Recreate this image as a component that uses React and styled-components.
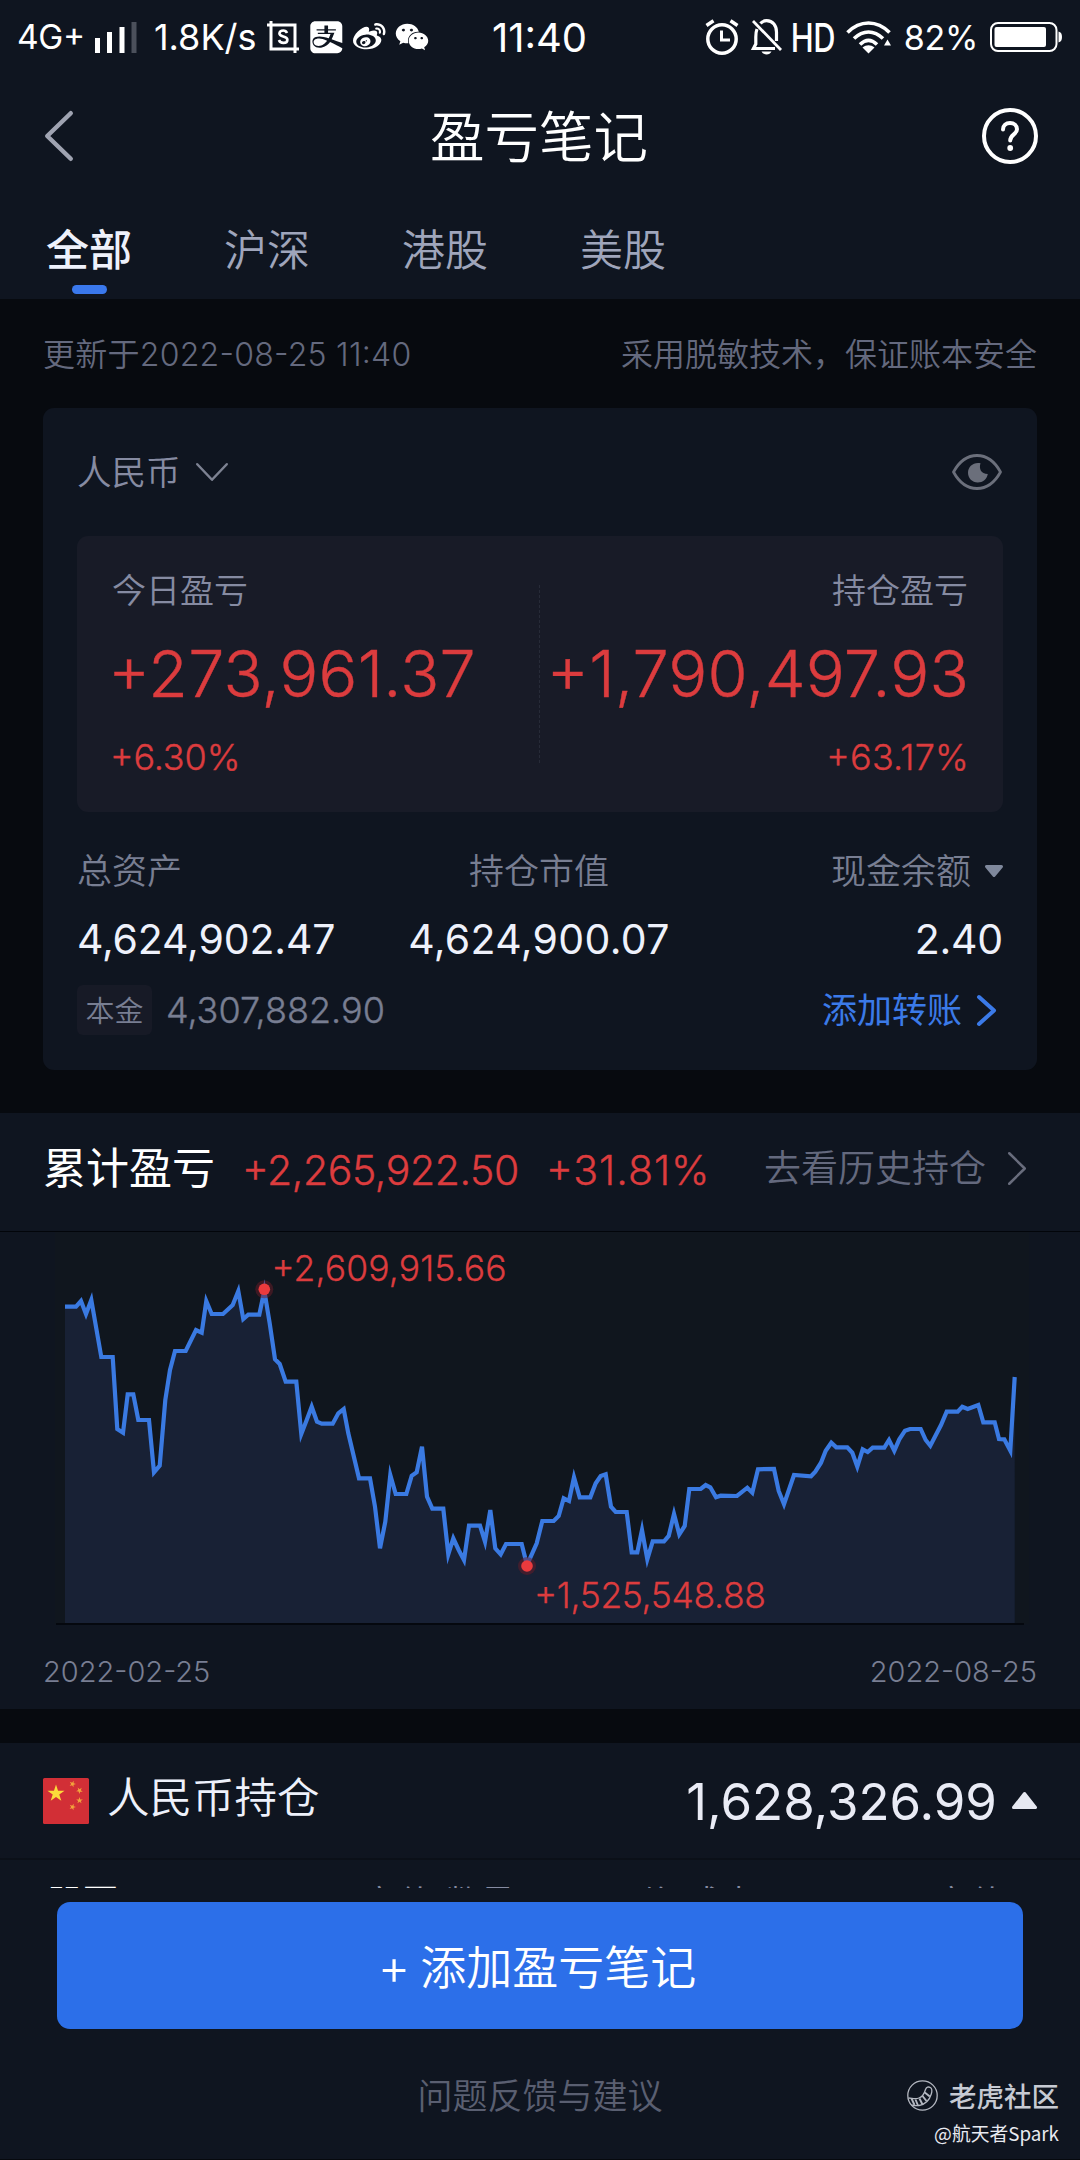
import React from "react";
import styled, { createGlobalStyle } from "styled-components";
import { FaAlipay, FaWeibo, FaWeixin } from "react-icons/fa6";

const c = {
  page: "#070a0f",
  panel: "#0f1520",
  inset: "#181b27",
  line: "#02050a",
  white: "#ffffff",
  soft: "#eef1fb",
  muted: "#868ba2",
  dim: "#787e92",
  faint: "#64697e",
  red: "#dc3c3e",
  blue: "#3b7ae8",
};

const Global = createGlobalStyle`
  * { box-sizing: border-box; }
  body { margin: 0; background: ${c.page}; }
`;

const Screen = styled.main`
  position: relative;
  width: 1080px;
  height: 2160px;
  display: flex;
  flex-direction: column;
  overflow: hidden;
  background: ${c.page};
  font-family: Inter, "Noto Sans CJK SC", sans-serif;
  font-feature-settings: "case";
  font-weight: 350;
  color: ${c.white};
  white-space: nowrap;
`;

const Text = styled.span`
  font-size: ${(p) => p.$size}px;
  line-height: ${(p) => p.$lh || p.$size}px;
  color: ${(p) => p.$color || "inherit"};
  font-weight: ${(p) => p.$weight || 350};
  letter-spacing: ${(p) => p.$ls || 0}px;
  margin: ${(p) => p.$m || 0};
`;

/* Figures set in the light cut, with slightly thickened stems. */
const Figure = styled(Text)`
  -webkit-text-stroke: 0.4px currentColor;
`;

const Svg = styled.svg`
  display: block;
  flex: none;
  overflow: visible;
`;

/* ---------- header ---------- */

const Header = styled.header`
  height: 299px;
  background: ${c.panel};
`;

const StatusBar = styled.div`
  display: grid;
  grid-template-columns: 1fr auto 1fr;
  align-items: center;
  height: 74px;
  padding: 0 18px 0 17px;
`;

const StatusGroup = styled.div`
  display: flex;
  align-items: center;
  justify-content: ${(p) => (p.$end ? "flex-end" : "flex-start")};
  gap: ${(p) => p.$gap}px;
`;

const NetSpeed = styled(Text)`
  margin: 0 0 0 7px;
`;

const HdBadge = styled.span`
  display: flex;
  justify-content: center;
  width: 42px;
  margin-left: -2px;
  font-size: 39px;
  line-height: 39px;
  font-weight: 500;
  letter-spacing: -0.5px;
  transform: scaleX(0.79);
`;

const AppIcons = styled.div`
  display: flex;
  align-items: center;
  gap: 9px;
  height: 32px;
  svg { display: block; flex: none; }
`;

const NavBar = styled.div`
  display: grid;
  grid-template-columns: 1fr auto 1fr;
  align-items: center;
  height: 124px;
  padding: 0 42px 0 45px;
`;

const NavEnd = styled.div`
  display: flex;
  justify-content: flex-end;
`;

const HelpButton = styled.div`
  display: flex;
  align-items: center;
  justify-content: center;
  width: 56px;
  height: 56px;
  border: 4.5px solid ${c.white};
  border-radius: 50%;
`;

const Tabs = styled.nav`
  display: flex;
  gap: 92px;
  padding: 17px 46px 0;
`;

const Tab = styled.div`
  display: flex;
  flex-direction: column;
  align-items: center;
  font-size: 43px;
  line-height: 70px;
  font-weight: ${(p) => (p.$active ? 500 : 350)};
  color: ${(p) => (p.$active ? c.soft : "#9fa5bb")};
  &::after {
    content: "";
    width: 35px;
    height: 9px;
    border-radius: 5px;
    background: ${(p) => (p.$active ? "#3a78ec" : "transparent")};
  }
`;

/* ---------- account card ---------- */

const NoticeRow = styled.div`
  display: flex;
  justify-content: space-between;
  align-items: center;
  height: 109px;
  padding: 2px 43px 0;
`;

const Card = styled.section`
  height: 662px;
  margin: 0 43px 43px;
  padding: 0 34px;
  border-radius: 11px;
  background: ${c.panel};
`;

const CardTop = styled.div`
  display: flex;
  justify-content: space-between;
  align-items: center;
  height: 128px;
  padding-right: 1px;
`;

const Currency = styled.div`
  display: flex;
  align-items: center;
  gap: 15px;
`;

const ProfitBox = styled.div`
  display: grid;
  grid-template-columns: 1fr 0 1fr;
  height: 276px;
  padding: 33px 35px 0;
  border-radius: 11px;
  background: ${c.inset};
`;

const Profit = styled.div`
  display: flex;
  flex-direction: column;
  align-items: ${(p) => (p.$end ? "flex-end" : "flex-start")};
  gap: 23px;
`;

const DashedRule = styled.div`
  height: 178px;
  margin: 16px 0 0 -1px;
  border-left: 1px dashed #272b38;
`;

const Stats = styled.div`
  display: grid;
  grid-template-columns: 1fr auto 1fr;
  margin-top: 37px;
`;

const Stat = styled.div`
  display: flex;
  flex-direction: column;
  align-items: ${(p) => p.$align};
  gap: 20px;
`;

const Inline = styled.div`
  display: flex;
  align-items: center;
  gap: ${(p) => p.$gap || 0}px;
`;

const CardBottom = styled.div`
  display: flex;
  justify-content: space-between;
  align-items: center;
  height: 50px;
  margin: 20px 7px 0 0;
`;

const Tag = styled.span`
  width: 75px;
  height: 50px;
  border-radius: 6px;
  background: #171a26;
  text-align: center;
  font-size: 29px;
  line-height: 54px;
  color: ${c.dim};
`;

/* ---------- cumulative profit ---------- */

const Panel = styled.section`
  background: ${c.panel};
  margin-bottom: ${(p) => p.$mb || 0}px;
`;

const TotalHead = styled.div`
  display: flex;
  align-items: center;
  height: 119px;
  padding: 0 54px 7px 43px;
  border-bottom: 1px solid ${c.line};
`;

const HistoryLink = styled.div`
  display: flex;
  align-items: center;
  gap: 22px;
  margin-left: auto;
`;

const DateRow = styled.div`
  display: flex;
  justify-content: space-between;
  align-items: center;
  height: 84px;
  padding: 9px 43px 0;
`;

/* ---------- holdings ---------- */

const HoldingHead = styled.div`
  display: flex;
  align-items: center;
  justify-content: space-between;
  height: 117px;
  padding: 0 43px;
  border-bottom: 2px solid #0b1018;
`;

const ColumnHead = styled.div`
  display: grid;
  grid-template-columns: 314px 243px 1fr auto;
  height: 28px;
  padding: 26px 75px 0 47px;
  overflow: hidden;
`;

const Footer = styled.footer`
  flex: 1;
  display: flex;
  flex-direction: column;
  align-items: center;
  padding-top: 14px;
  background: ${c.panel};
  border-bottom: 1px solid #06090e;
`;

const AddButton = styled.button`
  display: flex;
  align-items: center;
  justify-content: center;
  gap: 10px;
  width: 966px;
  height: 127px;
  margin-bottom: 45px;
  padding: 2px 6px 0 0;
  border: 0;
  border-radius: 13px;
  background: #2c6fe9;
  color: ${c.white};
  font-family: inherit;
`;

const Watermark = styled.div`
  position: absolute;
  right: 21px;
  bottom: 17px;
  display: flex;
  flex-direction: column;
  align-items: flex-end;
  gap: 12px;
  font-family: "Noto Sans CJK SC", sans-serif;
`;

/* ---------- drawings ---------- */

const Signal = () => (
  <Svg width="42" height="31" viewBox="0 0 42 31">
    <g fill="#fff">
      <rect x="0" y="16" width="5" height="15" />
      <rect x="12" y="10" width="5" height="21" />
      <rect x="24.5" y="5" width="5" height="26" />
      <rect x="36.5" y="0" width="5" height="31" fill="#4b505b" />
    </g>
  </Svg>
);

const CropS = () => (
  <Svg width="32" height="32" viewBox="0 0 32 32" fill="none" stroke="#fff" strokeWidth="3">
    <path d="M0 4H28V32M4 0V28H32" />
    <path strokeWidth="2.600" d="M20 12C19.300 10.300 17.900 9.500 16.200 9.500C14 9.500 12.400 10.700 12.400 12.500C12.400 16.400 20.400 14.400 20.400 18.700C20.400 20.600 18.700 21.900 16.400 21.900C14.200 21.900 12.600 20.900 12 19" />
  </Svg>
);

const Alarm = () => (
  <Svg width="34" height="36" viewBox="0 0 34 36" fill="none" stroke="#fff">
    <circle cx="17" cy="20" r="14.200" strokeWidth="3.500" />
    <path strokeWidth="3" d="M16.500 11.500V21H25" />
    <path strokeWidth="3.500" d="M1.500 6.500L8.500 1.800M32.500 6.500L25.500 1.800" />
  </Svg>
);

const BellOff = () => (
  <Svg width="31" height="36" viewBox="0 0 31 36" fill="none" stroke="#fff" strokeWidth="3.200">
    <path d="M6 10C5 12.500 4.800 15 4.800 18V25L2.500 29.500H24" />
    <path d="M9.500 4.500C11 2.500 13 1.700 15.500 1.700C22 1.700 25.500 7 25.500 13V22" />
    <path d="M2 2L30 31" strokeWidth="2.800" />
    <path d="M10.500 32.500H20.500C19.500 34.500 17.800 35.500 15.500 35.500C13.200 35.500 11.500 34.500 10.500 32.500Z" fill="#fff" stroke="none" />
  </Svg>
);

const Wifi = () => (
  <Svg width="46" height="33" viewBox="0 0 46 33" fill="none" stroke="#fff" strokeWidth="3.600">
    <path d="M1.500 11.500C14 -1.200 31 -1.200 43.500 11.500" />
    <path d="M8 17.500C17 8.800 28 8.800 37 17.500" />
    <path d="M14 23.500C19.500 18.200 25.500 18.200 31 23.500" />
    <path d="M16.500 26.500C20.500 23.500 24.500 23.500 28.500 26.500L22.500 32.500Z" fill="#fff" stroke="none" />
    <path d="M38 24.500L41.500 18.500L45 24.500Z" fill="#fff" stroke="none" />
  </Svg>
);

const Battery = () => (
  <Svg width="72" height="30" viewBox="0 0 72 30">
    <rect x="1" y="1" width="65.500" height="28" rx="7" fill="none" stroke="#fff" strokeWidth="2" />
    <rect x="4.500" y="5" width="51.500" height="20" rx="2" fill="#fff" />
    <path d="M68.500 9.500C71 10 72 12 72 15C72 18 71 20 68.500 20.500Z" fill="#fff" />
  </Svg>
);

const Chevron = ({ w, h, dir, color, stroke }) => {
  const s = stroke / 2;
  const d = {
    left: `M${w - s} ${s}L${s} ${h / 2}L${w - s} ${h - s}`,
    right: `M${s} ${s}L${w - s} ${h / 2}L${s} ${h - s}`,
    down: `M${s} ${s}L${w / 2} ${h - s}L${w - s} ${s}`,
  }[dir];
  return (
    <Svg width={w} height={h} fill="none" stroke={color} strokeWidth={stroke} strokeLinecap="round" strokeLinejoin="round">
      <path d={d} />
    </Svg>
  );
};

const QuestionMark = () => (
  <Svg width="18" height="30" viewBox="0 0 18 30" fill="none" stroke="#fff" strokeWidth="4" strokeLinecap="round">
    <path d="M2 8.500C2 4.500 5 2 9 2C13 2 16 4.600 16 8.300C16 13.500 9.200 13.300 9.200 19.500" />
    <circle cx="9.200" cy="27" r="2.900" fill="#fff" stroke="none" />
  </Svg>
);

const Eye = () => (
  <Svg width="50" height="36" viewBox="0 0 50 36">
    <path d="M1.500 18C7 8 15 1.500 25 1.500C35 1.500 43 8 48.500 18C43 28 35 34.500 25 34.500C15 34.500 7 28 1.500 18Z" fill="none" stroke="#6b6f7b" strokeWidth="2.800" strokeLinejoin="round" />
    <path d="M28.500 9.200C26.700 14.500 29 20 35.800 20C35 25 30.800 28.500 25.800 28.500C20.200 28.500 16 24.300 16 18.800C16 12.500 21.500 7.800 28.500 9.200Z" fill="#6b6f7b" />
  </Svg>
);

const Triangle = ({ w, h, up, color }) => (
  <Svg width={w} height={h} fill={color} stroke={color} strokeWidth="3" strokeLinejoin="round">
    <path d={up ? `M${w / 2} 1.500L${w - 1.5} ${h - 1.5}H1.500Z` : `M1.500 1.500H${w - 1.5}L${w / 2} ${h - 1.5}Z`} />
  </Svg>
);

const STAR = "M0 -1L.2245 -.309L.951 -.309L.3633 .118L.5878 .809L0 .382L-.5878 .809L-.3633 .118L-.951 -.309L-.2245 -.309Z";

const Flag = () => (
  <Svg width="46" height="46" viewBox="0 0 46 46">
    <rect width="46" height="46" rx="1.500" fill="#d22f36" />
    <path d={STAR} transform="translate(13 15.500) scale(9)" fill="#fbdc3a" />
    {[[29.5, 6, 20], [36.5, 12.5, 40], [36.5, 22.5, 0], [29.5, 29, 20]].map(([x, y, r]) => (
      <path key={`${x}-${y}`} d={STAR} transform={`translate(${x} ${y}) rotate(${r}) scale(3.500)`} fill="#f2a53c" />
    ))}
  </Svg>
);

const TigerLogo = () => (
  <Svg width="31" height="31" viewBox="0 0 31 31" fill="none" stroke="#b4b8c1" strokeWidth="1.300">
    <circle cx="15.500" cy="15.500" r="14.700" />
    <path d="M1.500 18C5 18 8 19.500 12 18C16 16.500 17.500 13 18.500 9.500C19.300 7 21.500 6.500 23.300 7.500C25.300 8.700 25.200 11 24.300 14C22.500 20 18 24.500 12 25.500C9 26 6.500 25.500 4.500 24.800" />
    <path strokeWidth="1.900" d="M4.500 18.500L7.500 25M8.500 19.500L11 25.500M12.500 18.500L15.500 24.500M15.500 16L19.500 21M17.800 12.500L22.800 16.500" />
  </Svg>
);

/* ---------- chart ---------- */

const SERIES = [
  [75, 260], [108, 260], [123, 243], [138, 282], [154, 240], [184, 411], [218, 411], [232, 627], [249, 638],
  [263, 523], [280, 523], [295, 600], [327, 600], [342, 757], [359, 737], [376, 540], [390, 450], [405, 393],
  [437, 393], [468, 330], [485, 338], [499, 243], [515, 282], [549, 282], [578, 255], [595, 213], [610, 297],
  [625, 284], [658, 284], [673, 212], [689, 310], [705, 418], [719, 432], [737, 485], [769, 485], [784, 642],
  [800, 600], [815, 560], [831, 605], [845, 611], [878, 611], [895, 580], [911, 567], [925, 640], [957, 775],
  [990, 775], [1005, 860], [1020, 985], [1036, 905], [1051, 765], [1067, 822], [1099, 822], [1115, 767],
  [1130, 757], [1146, 680], [1161, 830], [1177, 866], [1210, 866], [1225, 1003], [1240, 955], [1256, 990],
  [1272, 1020], [1287, 917], [1320, 917], [1335, 965], [1351, 870], [1366, 985], [1382, 1003], [1398, 972],
  [1445, 972], [1461, 1035], [1490, 970], [1507, 903], [1541, 903], [1556, 888], [1571, 835], [1587, 843],
  [1602, 772], [1619, 832], [1651, 832], [1667, 790], [1682, 768], [1697, 763], [1713, 860], [1727, 876],
  [1760, 876], [1775, 997], [1792, 997], [1806, 930], [1822, 1018], [1838, 964], [1872, 964], [1886, 948],
  [1902, 882], [1918, 943], [1934, 918], [1948, 807], [1982, 807], [1997, 795], [2011, 802], [2028, 832],
  [2042, 827], [2091, 828], [2122, 803], [2137, 818], [2154, 748], [2202, 747], [2216, 813], [2232, 853],
  [2262, 765], [2313, 769], [2326, 755], [2343, 728], [2357, 692], [2374, 668], [2389, 682], [2422, 682],
  [2437, 698], [2452, 740], [2468, 688], [2483, 696], [2498, 683], [2533, 683], [2547, 660], [2563, 692],
  [2578, 658], [2595, 632], [2610, 627], [2642, 627], [2657, 660], [2671, 677], [2703, 615], [2720, 575],
  [2753, 575], [2767, 560], [2783, 567], [2815, 555], [2830, 607], [2864, 607], [2877, 657], [2893, 658],
  [2911, 692], [2924, 471],
].map(([x, y]) => [40 + x / 3, y / 3 - 12]);

const linePoints = SERIES.map((p) => p.map((n) => n.toFixed(1)).join(",")).join(" ");
const BASE = 391;

const Extreme = ({ x, y, tx, ty, len, children }) => (
  <g>
    <circle cx={x} cy={y} r="9" fill="#6a1c28" fillOpacity=".5" />
    <circle cx={x} cy={y} r="5.800" fill="#ea3a3d" />
    <text x={tx} y={ty} fill={c.red} stroke={c.red} strokeWidth=".3" fontSize="35.500" fontWeight="350" textLength={len}>{children}</text>
  </g>
);

const Chart = () => (
  <Svg width="1080" height="393" viewBox="0 0 1080 393">
    <rect x="55" y="0" width="974" height="392" fill="#10161e" />
    <polygon points={`65,${BASE} ${linePoints} 1014.700,${BASE}`} fill="#182135" />
    <polyline points={linePoints} fill="none" stroke="#3a7ae2" strokeWidth="4.200" strokeMiterlimit="6" />
    <path d="M56 392H1024" stroke={c.line} strokeWidth="1.500" />
    <Extreme x={264.3} y={57.3} tx={271.5} ty={49} len={235}>+2,609,915.66</Extreme>
    <Extreme x={527} y={334} tx={534} ty={376} len={232}>+1,525,548.88</Extreme>
  </Svg>
);

export default function App() {
  return (
    <Screen>
      <Global />
      <Header>
        <StatusBar>
          <StatusGroup $gap={10}>
            <Text $size={33.5} $weight={400} $ls={-0.3} $m="2px 0 0">4G+</Text>
            <Signal />
            <NetSpeed $size={36} $weight={400}>1.8K/s</NetSpeed>
            <AppIcons>
              <CropS />
              <FaAlipay size={36.6} />
              <FaWeibo size={32.5} />
              <FaWeixin size={34} />
            </AppIcons>
          </StatusGroup>
          <Text $size={40} $weight={400} $m="2px 0 0">11:40</Text>
          <StatusGroup $end $gap={12}>
            <Alarm />
            <BellOff />
            <HdBadge>HD</HdBadge>
            <Wifi />
            <Text $size={34} $weight={400} $ls={-0.3} $m="2px 0 0">82%</Text>
            <Battery />
          </StatusGroup>
        </StatusBar>
        <NavBar>
          <Chevron w={28} h={50} dir="left" color="#9fa3b1" stroke={4.5} />
          <Text $size={54.5} $m="2px 1px 0 -4px">盈亏笔记</Text>
          <NavEnd>
            <HelpButton><QuestionMark /></HelpButton>
          </NavEnd>
        </NavBar>
        <Tabs>
          <Tab $active>全部</Tab>
          <Tab>沪深</Tab>
          <Tab>港股</Tab>
          <Tab>美股</Tab>
        </Tabs>
      </Header>

      <NoticeRow>
        <Text $size={32} $color={c.faint} $ls={0.25}>更新于2022-08-25 11:40</Text>
        <Text $size={32} $color={c.faint}>采用脱敏技术，保证账本安全</Text>
      </NoticeRow>

      <Card>
        <CardTop>
          <Currency>
            <Text $size={34.5} $color={c.muted} $m="2px 0 0">人民币</Text>
            <Chevron w={32} h={18} dir="down" color="#7d8292" stroke={2.5} />
          </Currency>
          <Eye />
        </CardTop>
        <ProfitBox>
          <Profit>
            <Text $size={34} $lh={44} $color={c.muted}>今日盈亏</Text>
            <Figure $size={64.5} $lh={76} $color={c.red} $ls={0.3} $m="0 0 0 -4px">+273,961.37</Figure>
            <Figure $size={36} $lh={44} $color={c.red} $ls={-0.1} $m="0 0 0 -2px">+6.30%</Figure>
          </Profit>
          <DashedRule />
          <Profit $end>
            <Text $size={34} $lh={44} $color={c.muted}>持仓盈亏</Text>
            <Figure $size={65} $lh={76} $color={c.red} $ls={0.15} $m="0 -1px 0 0">+1,790,497.93</Figure>
            <Figure $size={36} $lh={44} $color={c.red} $ls={0.2} $m="0 -1px 0 0">+63.17%</Figure>
          </Profit>
        </ProfitBox>
        <Stats>
          <Stat $align="flex-start">
            <Text $size={35} $lh={44} $color={c.dim}>总资产</Text>
            <Text $size={41} $lh={52} $weight={400} $color={c.soft} $ls={-0.15}>4,624,902.47</Text>
          </Stat>
          <Stat $align="center">
            <Text $size={35} $lh={44} $color={c.dim} $m="0 2px 0 0">持仓市值</Text>
            <Text $size={41} $lh={52} $weight={400} $color={c.soft} $ls={0.35} $m="0 2px 0 0">4,624,900.07</Text>
          </Stat>
          <Stat $align="flex-end">
            <Inline $gap={14}>
              <Text $size={35} $lh={44} $color={c.dim}>现金余额</Text>
              <Triangle w={18} h={12} color="#7f889c" />
            </Inline>
            <Text $size={41} $lh={52} $weight={400} $color={c.soft} $ls={-0.2}>2.40</Text>
          </Stat>
        </Stats>
        <CardBottom>
          <Inline $gap={14}>
            <Tag>本金</Tag>
            <Figure $size={36} $color={c.dim}>4,307,882.90</Figure>
          </Inline>
          <Inline $gap={15}>
            <Text $size={35} $weight={400} $color={c.blue}>添加转账</Text>
            <Chevron w={19} h={31} dir="right" color={c.blue} stroke={4} />
          </Inline>
        </CardBottom>
      </Card>

      <Panel $mb={34}>
        <TotalHead>
          <Inline>
            <Text $size={43} $weight={400}>累计盈亏</Text>
            <Figure $size={41} $color={c.red} $ls={-0.4} $m="3px 0 0 27px">+2,265,922.50</Figure>
            <Figure $size={41} $color={c.red} $ls={1} $m="3px 0 0 27px">+31.81%</Figure>
          </Inline>
          <HistoryLink>
            <Text $size={37} $color={c.faint}>去看历史持仓</Text>
            <Chevron w={18} h={33} dir="right" color="#686c7c" stroke={2.5} />
          </HistoryLink>
        </TotalHead>
        <Chart />
        <DateRow>
          <Text $size={29} $color={c.dim}>2022-02-25</Text>
          <Text $size={29} $color={c.dim}>2022-08-25</Text>
        </DateRow>
      </Panel>

      <Panel>
        <HoldingHead>
          <Inline $gap={18}>
            <Flag />
            <Text $size={42.5} $color={c.soft} $m="-4px 0 0">人民币持仓</Text>
          </Inline>
          <Inline $gap={15}>
            <Text $size={51} $weight={400} $color="#e9ebf5" $m="1px 0 0">1,628,326.99</Text>
            <Triangle w={25} h={17} up color="#e6e8f1" />
          </Inline>
        </HoldingHead>
        <ColumnHead>
          <Text $size={35} $weight={700} $m="0 0 0 1px">股票</Text>
          <Text $size={35} $color={c.muted} $m="0 0 0 2px">市值/数量</Text>
          <Text $size={35} $color={c.muted}>现价/成本</Text>
          <Text $size={35} $color={c.muted}>市值</Text>
        </ColumnHead>
      </Panel>

      <Footer>
        <AddButton>
          <Text $size={50}>+</Text>
          <Text $size={46}>添加盈亏笔记</Text>
        </AddButton>
        <Text $size={35} $lh={44} $color="#5a5f71">问题反馈与建议</Text>
      </Footer>

      <Watermark>
        <Inline $gap={11}>
          <TigerLogo />
          <Text $size={27.5} $weight={500} $color="#c6cad3">老虎社区</Text>
        </Inline>
        <Text $size={18.8} $lh={20} $weight={400} $color="#e8eaf0">@航天者Spark</Text>
      </Watermark>
    </Screen>
  );
}
